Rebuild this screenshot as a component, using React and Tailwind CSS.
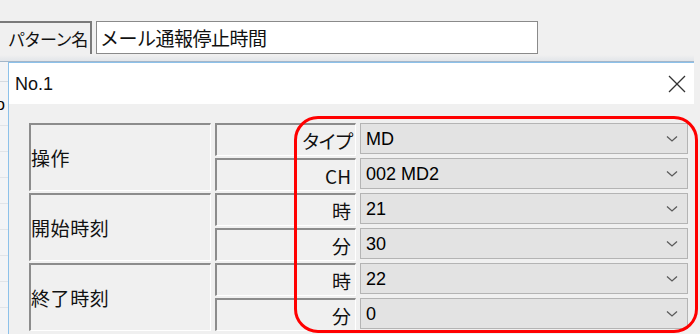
import React from "react";

const jp = { fontFamily: '"Noto Sans CJK JP", "Noto Sans", sans-serif' };
const lat = { fontFamily: '"Liberation Sans", "Noto Sans CJK JP", sans-serif' };

function Chevron() {
  return (
    <svg width="12" height="8" viewBox="0 0 12 8" className="shrink-0">
      <polyline points="1,1.5 6,6 11,1.5" fill="none" stroke="#5a5a5a" strokeWidth="1.3" />
    </svg>
  );
}

function Combo({ value }) {
  return (
    <div className="h-[31px] self-start flex items-center justify-between bg-[#e3e3e3] border border-[#b4b4b4] pl-[5px] pr-[9px]">
      <span className="text-[18px] leading-none text-black" style={lat}>{value}</span>
      <Chevron />
    </div>
  );
}

function SubCell({ children, cls = "" }) {
  return (
    <div className="border-t-2 border-l-2 border-[#8c8c8c] border-b border-r border-b-white border-r-white flex items-center justify-end pr-[4px]">
      <span className={"text-[19px] leading-none text-[#111] " + cls} style={jp}>{children}</span>
    </div>
  );
}

function LabelCell({ children }) {
  return (
    <div className="row-span-2 border-t-2 border-l-2 border-[#8c8c8c] border-b border-r border-b-white border-r-white flex items-center">
      <span className="text-[19px] leading-none tracking-[0.6px] text-[#111]" style={jp}>{children}</span>
    </div>
  );
}

export default function App() {
  return (
    <div className="relative w-[700px] h-[334px] overflow-hidden bg-[#f0f0f0]">
      {/* top pattern-name row */}
      <div className="h-[55px] pt-[21px] flex">
        <div className="w-[92px] h-[33px] border-t-2 border-r-2 border-[#7a7a7a] flex items-center pl-[8px]">
          <span className="text-[17px] leading-none tracking-[-1px] text-[#111]" style={jp}>パターン名</span>
        </div>
        <div className="ml-[4px] w-[442px] h-[33px] bg-white border border-[#8a8a8a] flex items-center pl-[3px]">
          <span className="text-[19px] leading-none tracking-[-0.5px] text-[#111]" style={jp}>メール通報停止時間</span>
        </div>
      </div>
      <div className="h-[6px] w-[694px] bg-gradient-to-b from-[#f0f0f0] to-[#e2e5e9]" />
      <div className="h-px w-[694px] bg-[#a3b6c9]" />

      <div className="flex">
        {/* window behind, left sliver */}
        <div className="w-[8px] h-[272px] overflow-hidden flex flex-col bg-[#f3f4f6]">
          <div className="h-[20px] border-b border-[#d6dbe1]" />
          <div className="h-[14px]" />
          <div className="h-[18px] flex items-center">
            <span className="ml-[-4px] text-[16px] leading-none text-black" style={lat}>o</span>
          </div>
          <div className="h-[12px] border-b border-[#e1e4e8]" />
          <div className="h-[26px] border-b border-[#e1e4e8]" />
          <div className="h-[26px] border-b border-[#e1e4e8]" />
          <div className="h-[26px] border-b border-[#e1e4e8]" />
          <div className="h-[26px] border-b border-[#e1e4e8]" />
          <div className="h-[26px] border-b border-[#e1e4e8]" />
          <div className="h-[26px] border-b border-[#e1e4e8]" />
          <div className="h-[26px] border-b border-[#e1e4e8]" />
        </div>

        {/* dialog */}
        <div className="w-[686px] h-[272px] border-l border-t border-[#8cc1ea] flex flex-col">
          <div className="h-[41px] bg-white flex items-center justify-between pl-[6px] pr-[8px]">
            <span className="text-[18px] leading-none text-[#111]" style={lat}>No.1</span>
            <svg width="18" height="18" viewBox="0 0 18 18">
              <line x1="1" y1="1" x2="17" y2="17" stroke="#333" strokeWidth="1.2" />
              <line x1="17" y1="1" x2="1" y2="17" stroke="#333" strokeWidth="1.2" />
            </svg>
          </div>
          <div className="flex-1 bg-[#f0f0f0] pt-[19px] pl-[20px]">
            <div className="grid grid-cols-[182px_141px_328px] grid-rows-[repeat(6,33px)] gap-x-[4px] gap-y-[2px]">
              <LabelCell>操作</LabelCell>
              <SubCell cls="tracking-[-2.5px] text-[17px]">タイプ</SubCell>
              <Combo value="MD" />
              <SubCell>CH</SubCell>
              <Combo value="002 MD2" />

              <LabelCell>開始時刻</LabelCell>
              <SubCell>時</SubCell>
              <Combo value="21" />
              <SubCell>分</SubCell>
              <Combo value="30" />

              <LabelCell>終了時刻</LabelCell>
              <SubCell>時</SubCell>
              <Combo value="22" />
              <SubCell>分</SubCell>
              <Combo value="0" />
            </div>
          </div>
        </div>
      </div>

      {/* red annotation outline */}
      <div className="absolute left-[294px] top-[116px] w-[404px] h-[217px] border-[3px] border-[#ff0000] rounded-[24px] pointer-events-none" />
    </div>
  );
}
